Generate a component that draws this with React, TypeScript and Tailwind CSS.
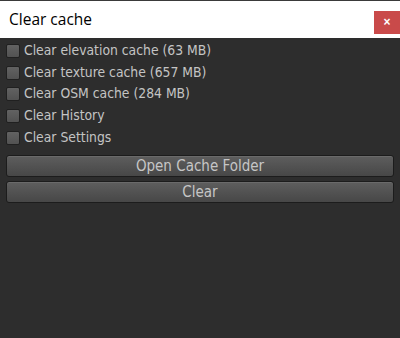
import React from "react";

const items = [
  "Clear elevation cache (63 MB)",
  "Clear texture cache (657 MB)",
  "Clear OSM cache (284 MB)",
  "Clear History",
  "Clear Settings",
];

function Btn({ label }: { label: string }) {
  return (
    <div className="h-[22px] rounded-[3px] border border-[#1c1c1c] bg-gradient-to-b from-[#5e5e5e] to-[#474747] shadow-[inset_0_1px_0_#6a6a6a] flex items-center justify-center text-[#c6c6c6] text-[15px] leading-none">
      {label}
    </div>
  );
}

export default function App() {
  return (
    <div className="w-[400px] h-[338px] flex flex-col bg-[#2d2d2d] overflow-hidden" style={{ fontFamily: '"DejaVu Sans Condensed", "Liberation Sans", Arial, sans-serif' }}>
      <div className="h-[38px] bg-white border-t border-[#3a3a3a] flex items-center justify-between pl-[9px] shrink-0">
        <span className="text-[15.5px] text-black" style={{ fontFamily: '"Open Sans", "Noto Sans", sans-serif' }}>Clear cache</span>
        <div className="w-[26px] h-[23px] bg-[#c94a4a] flex items-center justify-center text-white text-[12px] font-bold leading-none mt-[5px]" style={{ fontFamily: '"Liberation Sans", sans-serif' }}>
          ×
        </div>
      </div>
      <div className="flex flex-col pt-[2px] px-[6px]">
        {items.map((t) => (
          <div key={t} className="h-[21.7px] flex items-center gap-[4px]">
            <div className="w-[14px] h-[14px] rounded-[2px] bg-gradient-to-b from-[#626262] to-[#525252] border border-[#202020] shrink-0" />
            <span className="text-[13.8px] text-[#c4c4c4] leading-none">{t}</span>
          </div>
        ))}
        <div className="flex flex-col gap-[4px] mt-[7px]">
          <Btn label="Open Cache Folder" />
          <Btn label="Clear" />
        </div>
      </div>
    </div>
  );
}
